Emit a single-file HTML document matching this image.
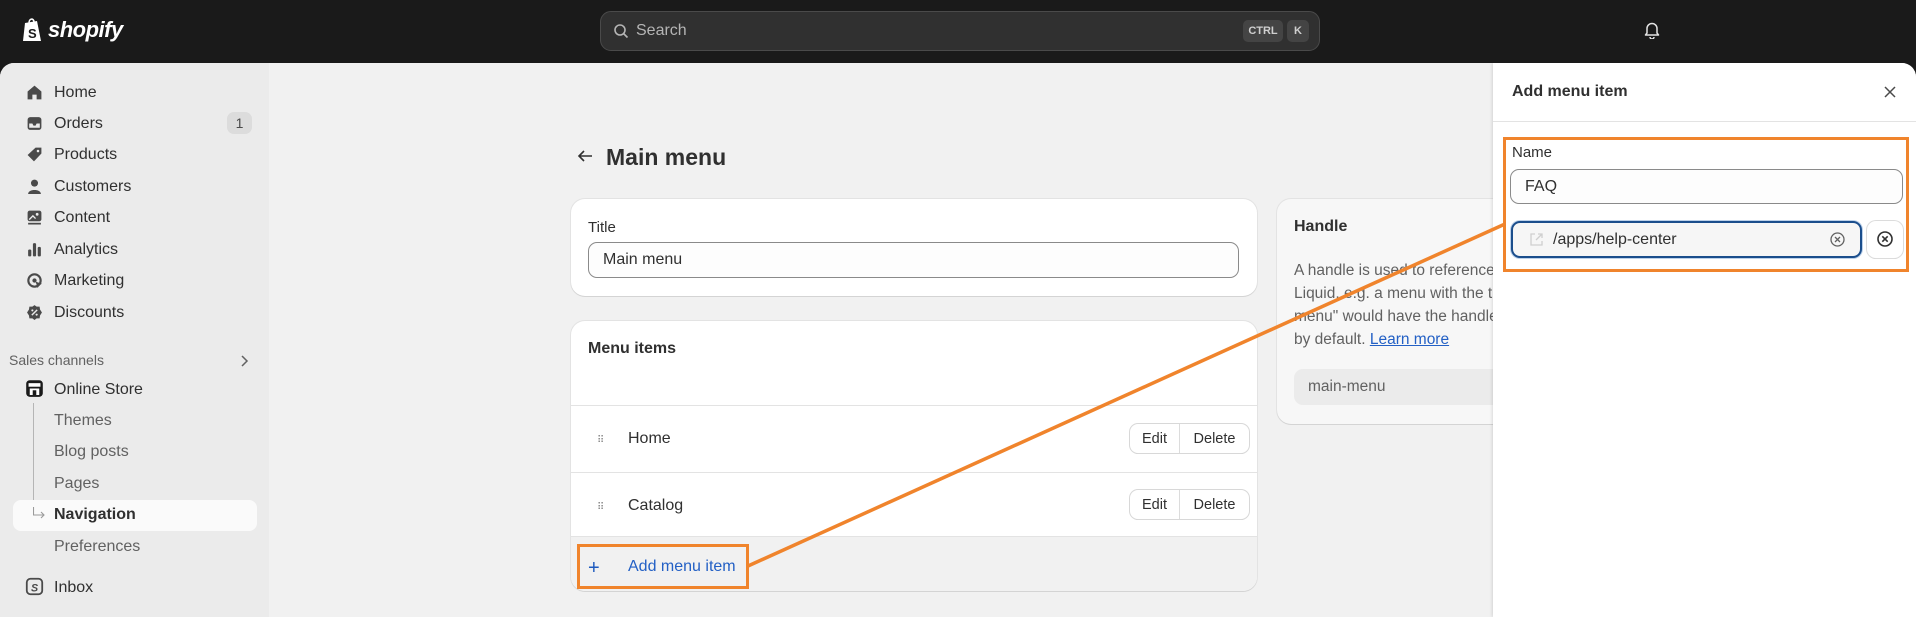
<!DOCTYPE html>
<html><head><meta charset="utf-8"><style>
*{box-sizing:border-box;margin:0;padding:0}
body{width:1916px;height:617px;overflow:hidden;background:#1a1a1a;font-family:"Liberation Sans",sans-serif;color:#303030;position:relative;font-size:16px}
.a{position:absolute}
.main{left:0;top:63px;width:1916px;height:554px;background:#f1f1f1;border-radius:14px 14px 0 0;overflow:hidden}
.side{left:0;top:0;width:269px;height:554px;background:#ebebeb}
.ni{position:absolute;left:54px;font-size:16px;color:#303030;line-height:20px}
.ic{position:absolute;left:26px;width:17px;height:17px}
.sub{color:#616161}
.card{position:absolute;background:#fff;border-radius:14px;box-shadow:0 1px 0 #d4d4d4,0 0 0 1px #e3e3e3}
.inp{position:absolute;border:1px solid #8a8a8a;border-radius:9px;background:#fdfdfd;font-size:16px;padding-left:14px;display:flex;align-items:center}
.btn{position:absolute;left:1130px;width:119px;height:29px;border-radius:8px;background:#fff;box-shadow:0 0 0 1px #d8d8d8,0 1px 0 #bbb;font-size:14.5px;display:flex}
.btn span{display:flex;align-items:center;justify-content:center}
.dr{position:absolute;left:597px;font-size:10px;color:#8a8a8a;letter-spacing:-1px}
</style></head><body>
<svg class="a" style="left:22px;top:17px" width="22" height="26" viewBox="0 0 22 26"><path d="M3 6 L15 4 L19 24 L1 24 Z" fill="#fff"/><path d="M7 6 C7 1 12 1 12 5" stroke="#fff" stroke-width="1.6" fill="none"/><text x="6" y="21" font-size="13" font-weight="700" fill="#1a1a1a" font-family="Liberation Sans">S</text></svg>
<div class="a" style="left:48px;top:17px;color:#fff;font-weight:700;font-style:italic;font-size:22px;letter-spacing:-0.5px">shopify</div>
<div class="a" style="left:600px;top:11px;width:720px;height:40px;background:#303030;border:1px solid #4a4a4a;border-radius:11px"></div>
<svg class="a" style="left:613px;top:23px" width="16" height="16" viewBox="0 0 16 16"><circle cx="7" cy="7" r="5" stroke="#b5b5b5" stroke-width="1.6" fill="none"/><path d="M11 11l3.5 3.5" stroke="#b5b5b5" stroke-width="1.6"/></svg>
<div class="a" style="left:636px;top:22px;color:#b5b5b5;font-size:16px">Search</div>
<div class="a" style="left:1243px;top:20px;width:40px;height:22px;background:#444;border-radius:5px;color:#cfcfcf;font-size:11px;font-weight:700;text-align:center;line-height:22px">CTRL</div>
<div class="a" style="left:1287px;top:20px;width:22px;height:22px;background:#444;border-radius:5px;color:#cfcfcf;font-size:11px;font-weight:700;text-align:center;line-height:22px">K</div>
<svg class="a" style="left:1644px;top:21px" width="16" height="18" viewBox="0 0 16 18"><path d="M3 12 V7.5 a5 5 0 0 1 10 0 V12 l1.5 2 h-13 z" stroke="#e3e3e3" stroke-width="1.5" fill="none" stroke-linejoin="round"/><path d="M6 16 a2 2 0 0 0 4 0" stroke="#e3e3e3" stroke-width="1.5" fill="none"/></svg>

<div class="a main">
 <div class="a side">
  <svg class="ic" style="top:21px" viewBox="0 0 16 16"><path d="M8 1.5 L14.5 7 V14.5 H10 V10 H6 V14.5 H1.5 V7 Z" fill="#4a4a4a"/></svg><div class="ni" style="top:20px">Home</div>
  <svg class="ic" style="top:52px" viewBox="0 0 16 16"><rect x="1.5" y="2" width="13" height="12" rx="2.5" fill="#4a4a4a"/><path d="M3 8 H6 L7 10 H9 L10 8 H13 V12 H3Z" fill="#ebebeb"/></svg><div class="ni" style="top:51px">Orders</div>
  <div class="a" style="left:227px;top:49px;width:25px;height:22px;background:#dcdcdc;border-radius:7px;font-size:14px;text-align:center;line-height:22px;color:#4a4a4a">1</div>
  <svg class="ic" style="top:83px" viewBox="0 0 16 16"><path d="M9 1.5 H14.5 V7 L7.5 14.5 L1.5 8.5 Z" fill="#4a4a4a"/><circle cx="11.3" cy="4.7" r="1.2" fill="#ebebeb"/></svg><div class="ni" style="top:82px">Products</div>
  <svg class="ic" style="top:115px" viewBox="0 0 16 16"><circle cx="8" cy="4.8" r="3.3" fill="#4a4a4a"/><path d="M2 15 C2 10 14 10 14 15Z" fill="#4a4a4a"/></svg><div class="ni" style="top:114px">Customers</div>
  <svg class="ic" style="top:146px" viewBox="0 0 16 16"><rect x="1.5" y="1.5" width="13" height="10" rx="2" fill="#4a4a4a"/><circle cx="10.5" cy="5" r="1.3" fill="#ebebeb"/><path d="M3 10 L6.5 6.5 L9 9" stroke="#ebebeb" stroke-width="1.3" fill="none"/><rect x="2" y="13" width="12" height="1.6" fill="#4a4a4a"/></svg><div class="ni" style="top:145px">Content</div>
  <svg class="ic" style="top:178px" viewBox="0 0 16 16"><rect x="2" y="8" width="3" height="6.5" rx="1.2" fill="#4a4a4a"/><rect x="6.5" y="2" width="3" height="12.5" rx="1.2" fill="#4a4a4a"/><rect x="11" y="5.5" width="3" height="9" rx="1.2" fill="#4a4a4a"/></svg><div class="ni" style="top:177px">Analytics</div>
  <svg class="ic" style="top:209px" viewBox="0 0 16 16"><circle cx="8" cy="8" r="5.8" stroke="#4a4a4a" stroke-width="2" fill="none"/><circle cx="8" cy="8" r="2" fill="#4a4a4a"/><path d="M9 9 L15 11 L12.5 12.5 L11 15Z" fill="#4a4a4a"/></svg><div class="ni" style="top:208px">Marketing</div>
  <svg class="ic" style="top:241px" viewBox="0 0 16 16"><path d="M8 1 L10 2.5 L12.8 2.5 L13.2 5.2 L15 8 L13.2 10.8 L12.8 13.5 L10 13.5 L8 15 L6 13.5 L3.2 13.5 L2.8 10.8 L1 8 L2.8 5.2 L3.2 2.5 L6 2.5Z" fill="#4a4a4a"/><path d="M5.5 10.5 L10.5 5.5" stroke="#ebebeb" stroke-width="1.4"/><circle cx="6" cy="6" r="1" fill="#ebebeb"/><circle cx="10" cy="10" r="1" fill="#ebebeb"/></svg><div class="ni" style="top:240px">Discounts</div>
  <div class="a" style="left:9px;top:289px;font-size:14px;color:#616161">Sales channels</div>
  <svg class="a" style="left:239px;top:291px" width="10" height="14" viewBox="0 0 10 14"><path d="M3 2 L8 7 L3 12" stroke="#616161" stroke-width="1.5" fill="none"/></svg>
  <svg class="ic" style="top:316px;left:25px;width:19px;height:19px" viewBox="0 0 16 16"><rect x="1" y="1" width="14" height="14" rx="3" fill="#1a1a1a"/><rect x="3" y="3.5" width="10" height="3" fill="#fff"/><rect x="4" y="8" width="8" height="5.5" fill="#fff"/><rect x="6.5" y="9.5" width="3" height="4" fill="#1a1a1a"/></svg><div class="ni" style="top:317px">Online Store</div>
  <div class="a" style="left:33px;top:340px;width:1px;height:108px;background:#b5b5b5"></div>
  <div class="a" style="left:13px;top:437px;width:244px;height:31px;background:#fafafa;border-radius:8px"></div>
  <svg class="a" style="left:33px;top:444px" width="14" height="14" viewBox="0 0 14 14"><path d="M0.5 0 V8 H11 M8 5 L11 8 L8 11" stroke="#9a9a9a" stroke-width="1.1" fill="none"/></svg>
  <div class="ni sub" style="top:348px">Themes</div>
  <div class="ni sub" style="top:379px">Blog posts</div>
  <div class="ni sub" style="top:411px">Pages</div>
  <div class="ni" style="top:442px;font-weight:700">Navigation</div>
  <div class="ni sub" style="top:474px">Preferences</div>
  <svg class="ic" style="top:514px;left:25px;width:19px;height:19px" viewBox="0 0 16 16"><rect x="1.5" y="1.5" width="13" height="13" rx="3" stroke="#4a4a4a" stroke-width="1.5" fill="none"/><text x="5" y="12" font-size="9" font-weight="700" fill="#4a4a4a" font-family="Liberation Sans" font-style="italic">S</text></svg><div class="ni" style="top:515px">Inbox</div>
 </div>

 <svg class="a" style="left:576px;top:85px" width="18" height="16" viewBox="0 0 18 16"><path d="M16 8 H3 M8 3 L3 8 L8 13" stroke="#303030" stroke-width="1.6" fill="none"/></svg>
 <div class="a" style="left:606px;top:81px;font-size:23px;font-weight:700">Main menu</div>

 <div class="card" style="left:571px;top:136px;width:686px;height:97px">
  <div class="a" style="left:17px;top:20px;font-size:15px">Title</div>
  <div class="inp" style="left:17px;top:43px;width:651px;height:36px">Main menu</div>
 </div>

 <div class="card" style="left:571px;top:258px;width:686px;height:270px;overflow:hidden">
  <div class="a" style="left:17px;top:19px;font-size:16px;font-weight:700">Menu items</div>
  <div class="a" style="left:0;top:84px;width:686px;height:1px;background:#e3e3e3"></div>
  <div class="a" style="left:0;top:151px;width:686px;height:1px;background:#e3e3e3"></div>
  <div class="a" style="left:0;top:215px;width:686px;height:55px;background:#f1f1f1;border-top:1px solid #e3e3e3"></div>
 </div>
 <div class="dr" style="top:372px">⠿</div><div class="a" style="left:628px;top:367px;font-size:16px">Home</div>
 <div class="btn" style="top:361px"><span style="width:50px;border-right:1px solid #dcdcdc">Edit</span><span style="flex:1">Delete</span></div>
 <div class="dr" style="top:439px">⠿</div><div class="a" style="left:628px;top:434px;font-size:16px">Catalog</div>
 <div class="btn" style="top:427px"><span style="width:50px;border-right:1px solid #dcdcdc">Edit</span><span style="flex:1">Delete</span></div>
 <div class="a" style="left:588px;top:494px;font-size:20px;color:#1f5bbf">+</div>
 <div class="a" style="left:628px;top:495px;font-size:16px;color:#2360c5">Add menu item</div>
 <div class="a" style="left:577px;top:481px;width:172px;height:45px;border:3px solid #f0842c"></div>

 <div class="card" style="left:1277px;top:136px;width:300px;height:225px;background:#f7f7f7">
  <div class="a" style="left:17px;top:19px;font-size:16px;font-weight:700">Handle</div>
  <div class="a" style="left:17px;top:60px;width:400px;font-size:15.5px;line-height:23px;color:#616161;white-space:nowrap">A handle is used to reference<br>Liquid, e.g. a menu with the t<br>menu" would have the handle<br>by default. <span style="color:#2360c5;text-decoration:underline">Learn more</span></div>
  <div class="a" style="left:17px;top:170px;width:300px;height:36px;background:#ebebeb;border-radius:9px;padding-left:14px;line-height:36px;font-size:15.5px;color:#616161">main-menu</div>
 </div>

 <div class="a" style="left:1493px;top:0;width:423px;height:554px;background:#fff;box-shadow:-1px 0 3px rgba(0,0,0,.12)">
  <div class="a" style="left:19px;top:20px;font-size:16px;font-weight:700">Add menu item</div>
  <svg class="a" style="left:390px;top:22px" width="14" height="14" viewBox="0 0 14 14"><path d="M2 2 L12 12 M12 2 L2 12" stroke="#4a4a4a" stroke-width="1.5"/></svg>
  <div class="a" style="left:0;top:58px;width:423px;height:1px;background:#e3e3e3"></div>
  <div class="a" style="left:19px;top:81px;font-size:15px">Name</div>
  <div class="inp" style="left:17px;top:106px;width:393px;height:35px">FAQ</div>
  <div class="inp" style="left:18px;top:158px;width:351px;height:37px;border:2px solid #1b4e8c;box-shadow:0 0 0 1px #bcd1ea;background:#f6f6f6;padding-left:40px">/apps/help-center</div>
  <svg class="a" style="left:36px;top:169px" width="15" height="15" viewBox="0 0 15 15"><path d="M6 2 H2 V13 H13 V9 M9 2 H13 V6 M13 2 L7 8" stroke="#cfcfcf" stroke-width="1.3" fill="none"/></svg>
  <svg class="a" style="left:336px;top:168px" width="17" height="17" viewBox="0 0 17 17"><circle cx="8.5" cy="8.5" r="6.5" stroke="#616161" stroke-width="1.3" fill="none"/><path d="M6 6 L11 11 M11 6 L6 11" stroke="#616161" stroke-width="1.3"/></svg>
  <div class="a" style="left:374px;top:158px;width:36px;height:37px;border-radius:9px;box-shadow:0 0 0 1px #dcdcdc,0 1px 0 #bbb;background:#fff"></div>
  <svg class="a" style="left:383px;top:167px" width="18" height="18" viewBox="0 0 18 18"><circle cx="9" cy="9" r="7" stroke="#303030" stroke-width="1.6" fill="none"/><path d="M6.3 6.3 L11.7 11.7 M11.7 6.3 L6.3 11.7" stroke="#303030" stroke-width="1.6"/></svg>
  <div class="a" style="left:10px;top:74px;width:406px;height:135px;border:3px solid #f0842c"></div>
 </div>
 <svg class="a" style="left:0;top:0" width="1916" height="554"><line x1="748" y1="503" x2="1505" y2="161" stroke="#f0842c" stroke-width="3.5"/></svg>
</div>
</body></html>
